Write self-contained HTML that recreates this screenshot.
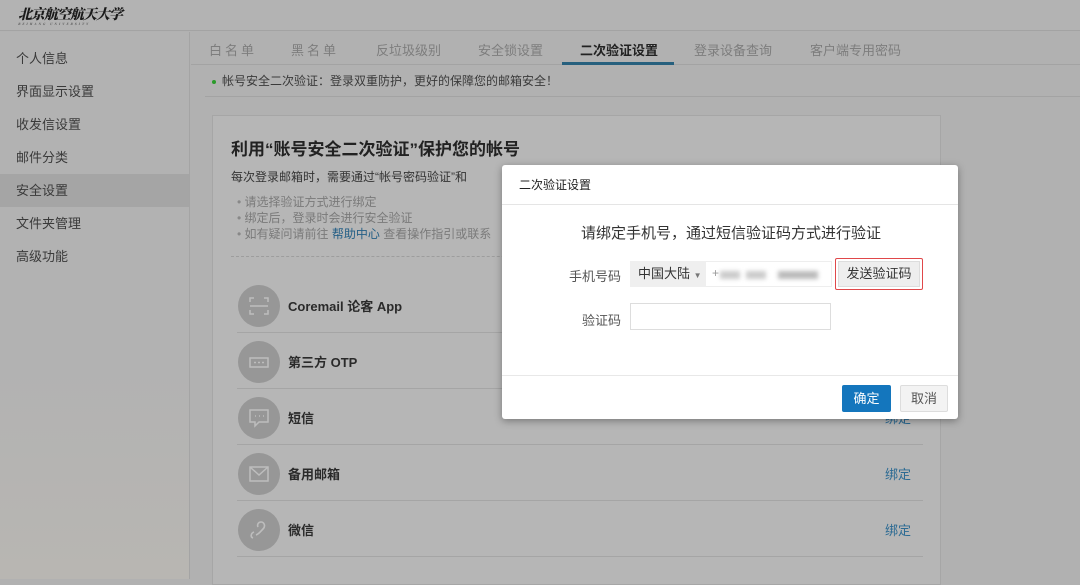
<!DOCTYPE html>
<html><head><meta charset="utf-8"><style>
*{margin:0;padding:0;box-sizing:border-box}
body{width:1080px;height:579px;overflow:hidden;background:#b1b1b1;font-family:"Liberation Sans","Noto Sans CJK SC",sans-serif;position:relative;color:#333}
.hdr{position:absolute;left:0;top:0;width:1080px;height:31px;background:#b3b3b3;border-bottom:1px solid #a3a3a3}
.logo{position:absolute;left:18px;top:4px;font-family:"Noto Serif CJK SC",serif;font-weight:900;font-size:14px;color:#1a1a1a;letter-spacing:-1px;font-style:italic}
.logo small{display:block;font-size:3px;letter-spacing:2px;color:#555;margin-top:-2px}
.side{position:absolute;left:0;top:32px;width:190px;height:547px;background:linear-gradient(#b2b2b2 60%,#b8b6b2);border-right:1px solid #a4a4a4}
.side div{height:33px;line-height:33px;padding-left:16px;font-size:13px;color:#3a3a3a}
.side .act{background:#a5a5a5}
.tabs{position:absolute;left:191px;top:32px;width:889px;height:33px;border-bottom:1px solid #a3a3a3}
.tabs span{position:absolute;top:8px;font-size:13px;color:#7d7d7d}
.tabs .on{color:#222;font-weight:bold}
.ul{position:absolute;left:562px;top:62px;width:112px;height:3px;background:#27607e}
.tip{position:absolute;left:212px;top:72px;font-size:12px;color:#3a3a3a}
.tip i{display:inline-block;width:4px;height:4px;border-radius:50%;background:#2a9b2a;margin-right:6px;vertical-align:middle}
.tipline{position:absolute;left:205px;top:96px;width:875px;height:1px;background:#a3a3a3}
.card{position:absolute;left:212px;top:115px;width:729px;height:470px;background:#b6b6b6;border:1px solid #a6a6a6}
.card h1{position:absolute;left:18px;top:19px;font-size:17px;color:#222;font-weight:bold}
.card .d{position:absolute;left:18px;top:52px;font-size:12px;color:#333}
.card ul{position:absolute;left:24px;top:78px;font-size:12px;color:#7a7a7a;line-height:16px;list-style:none}
.card ul li:before{content:"• ";color:#888}
.card ul b{color:#245f86;font-weight:normal}
.dash{position:absolute;left:18px;top:140px;width:690px;border-top:1px dashed #9d9d9d}
.row{position:absolute;left:24px;width:686px;height:56px;border-bottom:1px solid #a5a5a5}
.row .ic{position:absolute;left:1px;top:8px;width:42px;height:42px;border-radius:50%;background:#979797}
.row .t{position:absolute;left:51px;top:19px;font-size:13px;font-weight:bold;color:#2a2a2a}
.row .b{position:absolute;right:12px;top:19px;font-size:13px;color:#2b6a93}
.dlg{position:absolute;left:502px;top:165px;width:456px;height:254px;background:#fff;border-radius:3px;box-shadow:0 2px 8px rgba(0,0,0,.35)}
.dlg .ti{height:40px;line-height:40px;padding-left:17px;font-size:12px;color:#222;border-bottom:1px solid #e5e5e5}
.dlg .msg{position:absolute;left:0;width:456px;top:57px;text-align:center;font-size:15px;color:#333;padding-left:2px}
.lbl{position:absolute;font-size:13px;color:#555}
.sel{position:absolute;left:128px;top:96px;width:76px;height:26px;background:#efefef;font-size:13px;color:#333;line-height:26px;padding-left:8px}
.ph{position:absolute;left:204px;top:96px;width:126px;height:26px;border:1px solid #eee;border-left:none}
.blur{position:absolute;top:9px;height:8px;background:#ccc;filter:blur(2px)}
.send{position:absolute;left:333px;top:93px;width:88px;height:32px;border:1px solid #e0484a;border-radius:2px}
.send div{position:absolute;left:2px;top:2px;width:82px;height:26px;background:#eee;border:1px solid #ddd;font-size:13px;line-height:24px;text-align:center;color:#333}
.inp{position:absolute;left:128px;top:138px;width:201px;height:27px;border:1px solid #ddd}
.foot{position:absolute;left:0;top:210px;width:456px;border-top:1px solid #e8e8e8}
.ok{position:absolute;left:340px;top:220px;width:49px;height:27px;background:#1476bd;color:#fff;font-size:13px;line-height:27px;text-align:center;border-radius:2px}
.cn{position:absolute;left:398px;top:220px;width:48px;height:27px;background:#f3f3f3;border:1px solid #ddd;color:#555;font-size:13px;line-height:25px;text-align:center;border-radius:2px}
</style></head><body>
<div class="hdr"><div class="logo">北京航空航天大学<small>BEIHANG UNIVERSITY</small></div></div>
<div class="side" style="padding-top:10px">
<div>个人信息</div><div>界面显示设置</div><div>收发信设置</div><div>邮件分类</div><div class="act">安全设置</div><div>文件夹管理</div><div>高级功能</div>
</div>
<div class="tabs">
<span style="left:18px;letter-spacing:3px">白名单</span><span style="left:100px;letter-spacing:3px">黑名单</span><span style="left:185px">反垃圾级别</span><span style="left:287px">安全锁设置</span><span class="on" style="left:389px">二次验证设置</span><span style="left:503px">登录设备查询</span><span style="left:619px">客户端专用密码</span>
</div>
<div class="ul"></div>
<div class="tip"><i></i>帐号安全二次验证：登录双重防护，更好的保障您的邮箱安全！</div>
<div class="tipline"></div>
<div class="card">
<h1>利用“账号安全二次验证”保护您的帐号</h1>
<div class="d">每次登录邮箱时，需要通过“帐号密码验证”和</div>
<ul><li>请选择验证方式进行绑定</li><li>绑定后，登录时会进行安全验证</li><li>如有疑问请前往 <b>帮助中心</b> 查看操作指引或联系</li></ul>
<div class="dash"></div>
<div class="row" style="top:161px"><div class="ic"><svg width="42" height="42" viewBox="0 0 42 42" fill="none" stroke="#bdbdbd" stroke-width="1.5"><path d="M12 17v-4h4M26 13h4v4M30 25v4h-4M16 29h-4v-4M12 21h18"/></svg></div><div class="t">Coremail 论客 App</div></div>
<div class="row" style="top:217px"><div class="ic"><svg width="42" height="42" viewBox="0 0 42 42" fill="none" stroke="#bdbdbd" stroke-width="1.5"><rect x="12" y="17" width="18" height="9"/><path d="M16 21.5h2M20 21.5h2M24 21.5h2"/></svg></div><div class="t">第三方 OTP</div></div>
<div class="row" style="top:273px"><div class="ic"><svg width="42" height="42" viewBox="0 0 42 42" fill="none" stroke="#bdbdbd" stroke-width="1.5"><path d="M12 13h18v12h-9l-4 4v-4h-5z"/><path d="M17 19h1M21 19h1M25 19h1"/></svg></div><div class="t">短信</div><div class="b">绑定</div></div>
<div class="row" style="top:329px"><div class="ic"><svg width="42" height="42" viewBox="0 0 42 42" fill="none" stroke="#bdbdbd" stroke-width="1.5"><rect x="12" y="14" width="18" height="14"/><path d="M12 14l9 8 9-8"/></svg></div><div class="t">备用邮箱</div><div class="b">绑定</div></div>
<div class="row" style="top:385px"><div class="ic"><svg width="42" height="42" viewBox="0 0 42 42" fill="none" stroke="#bdbdbd" stroke-width="1.6"><path d="M15 29c-3-1-2-5 1-6M18 26c3-1 5-4 7-6 3-3 1-7-2-7-3 0-4 3-3 5"/></svg></div><div class="t">微信</div><div class="b">绑定</div></div>
</div>
<div class="dlg">
<div class="ti">二次验证设置</div>
<div class="msg">请绑定手机号，通过短信验证码方式进行验证</div>
<div class="lbl" style="left:67px;top:101px">手机号码</div>
<div class="sel">中国大陆 <span style="font-size:8px;color:#777">▼</span></div>
<div class="ph"><span style="position:absolute;left:6px;top:4px;font-size:12px;color:#999">+</span><div class="blur" style="left:14px;width:20px"></div><div class="blur" style="left:40px;width:20px"></div><div class="blur" style="left:72px;width:40px;background:#bbb"></div></div>
<div class="send"><div>发送验证码</div></div>
<div class="lbl" style="left:80px;top:145px">验证码</div>
<div class="inp"></div>
<div class="foot"></div>
<div class="ok">确定</div>
<div class="cn">取消</div>
</div>
</body></html>
